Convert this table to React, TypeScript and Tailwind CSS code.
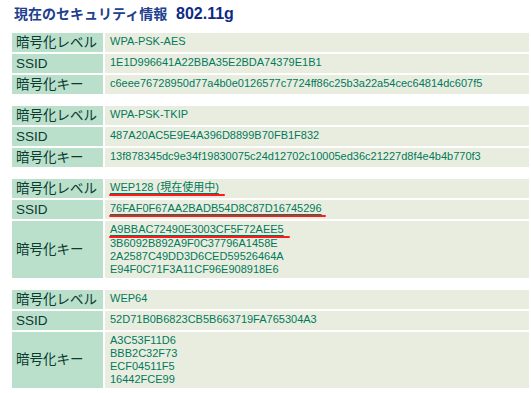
import React from "react";

type Row = { label: string; lines: React.ReactNode[] };

const LBL = "w-[91px] h-[19px] bg-[#bae0cc] text-[#0b3a2f] text-[13.5px] leading-[14px] pl-[4px] pr-[2px] py-[2px] align-middle whitespace-nowrap";
const VAL = "h-[19px] bg-[#e9eddf] text-[#007a5c] text-[11px] leading-[13px] pl-[5px] pr-[6px] py-[2px] align-top whitespace-nowrap";

function Marked({ children, extra }: { children: React.ReactNode; extra: string }) {
  return (
    <span className="relative inline-block underline underline-offset-[2px] decoration-[#007a5c]">
      {children}
      <span className={`absolute left-[-1px] bottom-[-2px] h-[2px] bg-[#ff1a1a] rounded-full ${extra}`} />
    </span>
  );
}

function Table({ rows }: { rows: Row[] }) {
  return (
    <table className="ml-[10px] border-separate border-spacing-[2px]">
      <tbody>
        {rows.map((r, i) => (
          <tr key={i}>
            <td className={LBL}>{r.label}</td>
            <td className={VAL}>
              {r.lines.map((l, j) => (
                <div key={j} className={j === 0 && r.lines.length > 1 && typeof l !== "string" ? "mb-[1px]" : ""}>
                  {l}
                </div>
              ))}
            </td>
          </tr>
        ))}
      </tbody>
    </table>
  );
}

export default function App() {
  return (
    <div
      className="w-[531px] h-[393px] bg-white overflow-hidden"
      style={{ fontFamily: '"Liberation Sans", "Noto Sans CJK JP", sans-serif' }}
    >
      <div className="h-[31px] pl-[14px] pt-[4px] text-[14px] leading-[20px] font-bold text-[#21408f] whitespace-nowrap">
        現在のセキュリティ情報 <span className="ml-[5px] text-[16px] text-[#0f2a86]">802.11g</span>
      </div>
      <div className="flex flex-col gap-[8px]">
        <Table
          rows={[
            { label: "暗号化レベル", lines: ["WPA-PSK-AES"] },
            { label: "SSID", lines: ["1E1D996641A22BBA35E2BDA74379E1B1"] },
            { label: "暗号化キー", lines: ["c6eee76728950d77a4b0e0126577c7724ff86c25b3a22a54cec64814dc607f5"] },
          ]}
        />
        <Table
          rows={[
            { label: "暗号化レベル", lines: ["WPA-PSK-TKIP"] },
            { label: "SSID", lines: ["487A20AC5E9E4A396D8899B70FB1F832"] },
            { label: "暗号化キー", lines: ["13f878345dc9e34f19830075c24d12702c10005ed36c21227d8f4e4b4b770f3"] },
          ]}
        />
        <Table
          rows={[
            { label: "暗号化レベル", lines: [<Marked extra="right-[-6px]">WEP128 (現在使用中)</Marked>] },
            { label: "SSID", lines: [<Marked extra="right-[-4px]">76FAF0F67AA2BADB54D8C87D16745296</Marked>] },
            {
              label: "暗号化キー",
              lines: [
                <Marked extra="right-[-6px]">A9BBAC72490E3003CF5F72AEE5</Marked>,
                "3B6092B892A9F0C37796A1458E",
                "2A2587C49DD3D6CED59526464A",
                "E94F0C71F3A11CF96E908918E6",
              ],
            },
          ]}
        />
        <Table
          rows={[
            { label: "暗号化レベル", lines: ["WEP64"] },
            { label: "SSID", lines: ["52D71B0B6823CB5B663719FA765304A3"] },
            { label: "暗号化キー", lines: ["A3C53F11D6", "BBB2C32F73", "ECF04511F5", "16442FCE99"] },
          ]}
        />
      </div>
    </div>
  );
}
